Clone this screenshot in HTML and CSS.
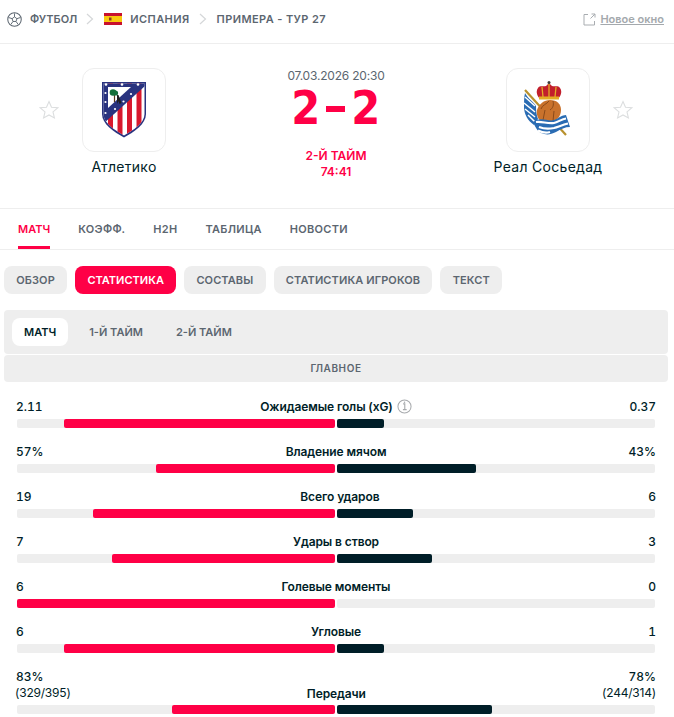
FILE: index.html
```html
<!DOCTYPE html>
<html lang="ru">
<head>
<meta charset="utf-8">
<title>Атлетико - Реал Сосьедад</title>
<link rel="stylesheet" href="styles.css">
</head>
<body>
<header class="crumbs">
  <nav class="crumb-list">
    <svg class="ball" viewBox="0 0 16 16" width="15" height="15"><circle cx="8" cy="8" r="7.200" fill="none" stroke="#5c6670" stroke-width="1.100"/><path d="M8 5.200l2.600 1.900-1 3H6.400l-1-3zM8 5.200V1.500M10.600 7.100l3.600-1.200M9.600 10.100l2.200 3M6.400 10.100l-2.200 3M5.400 7.100L1.800 5.900" fill="none" stroke="#5c6670" stroke-width="1"/></svg>
    <span class="crumb">ФУТБОЛ</span>
    <svg class="chev" viewBox="0 0 8 12" width="8" height="12"><path d="M1 1l5.500 5L1 11" fill="none" stroke="#d5d7d9" stroke-width="1.200"/></svg>
    <svg class="flag" viewBox="0 0 18 12" width="18" height="12"><rect width="18" height="12" fill="#c8102e"/><rect y="3" width="18" height="6" fill="#f9c80e"/><rect x="5" y="4.500" width="2.500" height="3" fill="#8a3a1c"/></svg>
    <span class="crumb">ИСПАНИЯ</span>
    <svg class="chev" viewBox="0 0 8 12" width="8" height="12"><path d="M1 1l5.500 5L1 11" fill="none" stroke="#d5d7d9" stroke-width="1.200"/></svg>
    <span class="crumb">ПРИМЕРА - ТУР 27</span>
  </nav>
  <a class="new-window" href="#">
    <svg viewBox="0 0 13 13" width="13" height="13"><path d="M5 1.500H1v10.500h10.500V8M7.500 5.500l4.500-4.500M8.500 1H12v3.500" fill="none" stroke="#a9adb1" stroke-width="1"/></svg>
    <span>Новое окно</span>
  </a>
</header>

<section class="match">
  <div class="team">
    <svg class="star" viewBox="0 0 20 20" width="20" height="20"><path d="M10 1.500l2.500 5.700 6.200.6-4.700 4.100 1.400 6.100L10 14.900l-5.400 3.100L6 11.900 1.300 7.800l6.200-.6z" fill="none" stroke="#dcdedf" stroke-width="1.100"/></svg>
    <div class="team-main">
      <div class="crest-box">
        <svg viewBox="0 0 44 56" width="44" height="56">
          <defs>
            <clipPath id="shield"><path d="M1.500 1.500h41V32c0 9-11 16-20.500 21.500C12.500 48 1.500 41 1.500 32z"/></clipPath>
          </defs>
          <path d="M0 0h44v32c0 10-12 18-22 23.500C12 50 0 42 0 32z" fill="#29337f"/>
          <g clip-path="url(#shield)">
            <rect width="44" height="56" fill="#fff"/>
            <path d="M6 0h5v56H6zM15.500 0h5v56h-5zM25 0h5v56h-5zM34.500 0h5v56h-5z" fill="#d8182d"/>
            <path d="M0 0h44v3L0 43z" fill="#29337f"/>
          </g>
          <path d="M6 5h23L6 26z" fill="#fff"/>
          <path d="M12.500 13v7" stroke="#5a3a1c" stroke-width="1.200"/>
          <circle cx="11" cy="10.500" r="3.300" fill="#15703a"/>
          <circle cx="13.500" cy="11" r="2.600" fill="#15703a"/>
          <path d="M15 13l1.500 0 3 8-2 1-1-3-1.500 3z" fill="#1f1f1f"/>
          <g fill="#fff">
            <circle cx="4" cy="2.500" r="1.300"/><circle cx="20" cy="2.500" r="1.300"/><circle cx="36" cy="2.500" r="1.300"/>
            <circle cx="3.500" cy="11" r="1.100"/><circle cx="3.500" cy="20" r="1.100"/><circle cx="3.500" cy="31" r="1.100"/>
            <circle cx="29" cy="12" r="1.100"/><circle cx="21.500" cy="19.500" r="1.100"/><circle cx="13" cy="27" r="1.100"/>
          </g>
        </svg>
      </div>
      <div class="team-name">Атлетико</div>
    </div>
  </div>

  <div class="score-col">
    <div class="date">07.03.2026 20:30</div>
    <div class="score"><span>2</span><i class="dash"></i><span>2</span></div>
    <div class="status">2-Й ТАЙМ</div>
    <div class="status">74:41</div>
  </div>

  <div class="team">
    <div class="team-main">
      <div class="crest-box">
        <svg class="crest-rs" viewBox="0 0 56 64" width="56" height="64">
          <path d="M5 10l41 45" stroke="#b8912d" stroke-width="2.200"/>
          <path d="M5 13c3 6 9 9 11 13 0 3 0 8 2 13l-4 6c-6-4-10-11-10-18 0-5 0-10 1-14z" fill="#2a6cb3"/>
          <path d="M5 17l10 9M4 23l11 9M5 29l10 8M8 35l7 7" stroke="#fff" stroke-width="1.500"/>
          <path d="M18 8c2-3 5-1 8-2l3-3 3 3c3 1 6-1 8 2 3 4 0 9-2 11H20c-2-2-5-7-2-11z" fill="#c21f2c"/>
          <path d="M19 16.500h20v3H19z" fill="#e4ad24"/>
          <path d="M22 7l1 10M29 4v13M36 7l-1 10" stroke="#e4ad24" stroke-width="1.300"/>
          <circle cx="29" cy="2.500" r="1.500" fill="#3c3c3c"/>
          <path d="M30 20c7 0 11 4 11 10s-4 11-10 12H22c-4-2-6-8-5-12 2-6 7-10 13-10z" fill="#c9722c"/>
          <path d="M29 21c-2 3-7 4-8 8M33 21c1 4 0 7-3 9M25 30l-2 10M34 31l-1 10" stroke="#8a4a1a" stroke-width="1" fill="none"/>
          <path d="M13 42c8-6 15 0 21-2 5-2 8-5 12-5l4 12c-5 0-9 2-14 5-6 3-10 3-15 1-4-2-6-7-8-11z" fill="#2a6cb3"/>
          <path d="M16 42c6-1 11 2 18 1 4-1 8-4 12-4.500M19 47c5 2 10 2 15 1 4-1 8-3 14-4.500M18 50.500c4 2 8 3 12 1.500" stroke="#fff" stroke-width="2.200" fill="none"/>
        </svg>
      </div>
      <div class="team-name">Реал Сосьедад</div>
    </div>
    <svg class="star" viewBox="0 0 20 20" width="20" height="20"><path d="M10 1.500l2.500 5.700 6.200.6-4.700 4.100 1.400 6.100L10 14.900l-5.400 3.100L6 11.900 1.300 7.800l6.200-.6z" fill="none" stroke="#dcdedf" stroke-width="1.100"/></svg>
  </div>
</section>

<nav class="main-tabs">
  <a class="main-tab is-active" href="#">МАТЧ</a>
  <a class="main-tab" href="#">КОЭФФ.</a>
  <a class="main-tab" href="#">H2H</a>
  <a class="main-tab" href="#">ТАБЛИЦА</a>
  <a class="main-tab" href="#">НОВОСТИ</a>
</nav>

<nav class="pills">
  <a class="pill" href="#">ОБЗОР</a>
  <a class="pill is-active" href="#">СТАТИСТИКА</a>
  <a class="pill" href="#">СОСТАВЫ</a>
  <a class="pill" href="#">СТАТИСТИКА ИГРОКОВ</a>
  <a class="pill" href="#">ТЕКСТ</a>
</nav>

<div class="periods">
  <a class="period is-active" href="#">МАТЧ</a>
  <a class="period" href="#">1-Й ТАЙМ</a>
  <a class="period" href="#">2-Й ТАЙМ</a>
</div>
<div class="group-title">ГЛАВНОЕ</div>

<section class="stats">
  <div class="stat">
    <div class="stat-head"><span class="val">2.11</span><span class="label">Ожидаемые голы (xG)<svg class="info" viewBox="0 0 16 16" width="15" height="15"><circle cx="8" cy="8" r="7" fill="none" stroke="#a7aaad" stroke-width="1.100"/><path d="M6.500 5.200H8.300V11M6.300 11.300h4" fill="none" stroke="#a7aaad" stroke-width="1.200"/><circle cx="8" cy="3.500" r=".8" fill="#a7aaad"/></svg></span><span class="val">0.37</span></div>
    <div class="bars"><div class="track home"><div class="fill" style="width:85.300%"></div></div><div class="track away"><div class="fill" style="width:14.700%"></div></div></div>
  </div>
  <div class="stat">
    <div class="stat-head"><span class="val">57%</span><span class="label">Владение мячом</span><span class="val">43%</span></div>
    <div class="bars"><div class="track home"><div class="fill" style="width:56.300%"></div></div><div class="track away"><div class="fill" style="width:43.700%"></div></div></div>
  </div>
  <div class="stat">
    <div class="stat-head"><span class="val">19</span><span class="label">Всего ударов</span><span class="val">6</span></div>
    <div class="bars"><div class="track home"><div class="fill" style="width:76%"></div></div><div class="track away"><div class="fill" style="width:24%"></div></div></div>
  </div>
  <div class="stat">
    <div class="stat-head"><span class="val">7</span><span class="label">Удары в створ</span><span class="val">3</span></div>
    <div class="bars"><div class="track home"><div class="fill" style="width:70%"></div></div><div class="track away"><div class="fill" style="width:30%"></div></div></div>
  </div>
  <div class="stat">
    <div class="stat-head"><span class="val">6</span><span class="label">Голевые моменты</span><span class="val">0</span></div>
    <div class="bars"><div class="track home"><div class="fill" style="width:100%"></div></div><div class="track away"><div class="fill" style="width:0%"></div></div></div>
  </div>
  <div class="stat">
    <div class="stat-head"><span class="val">6</span><span class="label">Угловые</span><span class="val">1</span></div>
    <div class="bars"><div class="track home"><div class="fill" style="width:85.300%"></div></div><div class="track away"><div class="fill" style="width:14.700%"></div></div></div>
  </div>
  <div class="stat stat-tall">
    <div class="stat-head stat-head-tall">
      <div class="val-stack val-left"><span class="val">83%</span><span class="sub">(329/395)</span></div>
      <span class="label">Передачи</span>
      <div class="val-stack val-right"><span class="val">78%</span><span class="sub">(244/314)</span></div>
    </div>
    <div class="bars"><div class="track home"><div class="fill" style="width:51.300%"></div></div><div class="track away"><div class="fill" style="width:48.700%"></div></div></div>
  </div>
</section>
</body>
</html>
```
FILE: styles.css
```css
* { box-sizing: border-box; }
html, body { margin: 0; padding: 0; background: #fff; }
body {
  width: 674px;
  height: 717px;
  overflow: hidden;
  font-family: Inter, "Noto Sans", sans-serif;
  color: #001e28;
}
a { text-decoration: none; color: inherit; }

.crumbs {
  height: 44px;
  display: flex;
  align-items: center;
  justify-content: space-between;
  padding: 0 10px 5px 7px;
  border-bottom: 1px solid #eeeeee;
}
.crumb-list { display: flex; align-items: center; }
.ball { margin-right: 8px; }
.crumb {
  font-size: 11px;
  font-weight: 600;
  letter-spacing: 0.4px;
  color: #5c6670;
}
.crumb:first-of-type { letter-spacing: 0; }
.chev { margin: 0 10px 0 9px; }
.flag { margin-right: 8px; }
.new-window {
  display: flex;
  align-items: center;
  gap: 4px;
  font-size: 11px;
  font-weight: 600;
  color: #a4a9ad;
}
.new-window span { text-decoration: underline; }

.match {
  height: 165px;
  display: flex;
  justify-content: space-between;
  padding: 24px 41px 0 39px;
  border-bottom: 1px solid #eeeeee;
}
.team { display: flex; align-items: flex-start; }
.star { margin-top: 32px; flex: none; }
.team-main { width: 124px; display: flex; flex-direction: column; align-items: center; margin: 0 0 0 3px; }
.team + .score-col + .team .team-main { margin: 0 3px 0 0; }
.crest-box {
  width: 84px;
  height: 84px;
  border: 1px solid #eeeeee;
  border-radius: 12px;
  display: flex;
  align-items: center;
  justify-content: center;
}
.crest-rs { flex: none; margin-top: 3px; }
.team-name { margin-top: 6px; font-size: 14px; line-height: 17px; letter-spacing: 0.3px; color: #001e28; }
.score-col { display: flex; flex-direction: column; align-items: center; }
.date { font-size: 12px; line-height: 16px; letter-spacing: -0.2px; color: #5c6670; }
.score {
  height: 48px;
  display: flex;
  align-items: center;
  gap: 4px;
  margin-bottom: 16px;
}
.score span {
  font-family: "DejaVu Sans", sans-serif;
  font-size: 48px;
  font-weight: 700;
  line-height: 40px;
  color: #ff0046;
  transform: scale(0.870, 0.950);
}
.dash { width: 19px; height: 6px; margin-top: 2px; background: #ff0046; }
.status { font-size: 12px; font-weight: 600; line-height: 16px; color: #ff0046; }

.main-tabs {
  height: 41px;
  display: flex;
  gap: 28px;
  padding: 0 18px;
  border-bottom: 1px solid #eeeeee;
}
.main-tab {
  height: 40px;
  line-height: 40px;
  font-size: 11px;
  font-weight: 600;
  letter-spacing: 0.3px;
  color: #5c6670;
}
.main-tab.is-active { color: #ff0046; border-bottom: 3px solid #ff0046; letter-spacing: 0; }

.pills { display: flex; gap: 8px; padding: 16px 0 0 4px; }
.pill {
  height: 28px;
  line-height: 28px;
  padding: 0 12.25px;
  background: #eeeeee;
  border-radius: 8px;
  font-size: 11px;
  font-weight: 600;
  letter-spacing: 0.1px;
  color: #5c6670;
}
.pill.is-active { background: #ff0046; color: #fff; letter-spacing: 0; }

.periods {
  width: 664px;
  height: 44px;
  margin: 16px 0 0 4px;
  padding: 8px;
  display: flex;
  gap: 9px;
  background: #eeeeee;
  border-radius: 4px;
}
.period {
  height: 28px;
  line-height: 28px;
  padding: 0 12px;
  border-radius: 8px;
  font-size: 11px;
  font-weight: 600;
  color: #5c6670;
}
.period.is-active { background: #fff; color: #001e28; }

.group-title {
  width: 664px;
  height: 27px;
  margin: 1px 0 0 4px;
  background: #eeeeee;
  border-radius: 4px;
  text-align: center;
  line-height: 27px;
  font-size: 10px;
  font-weight: 600;
  letter-spacing: 0.6px;
  color: #5c6670;
}

.stats { padding: 13px 18px 0 16px; display: flex; flex-direction: column; gap: 12px; }
.stat { height: 33px; display: flex; flex-direction: column; }
.stat-tall { height: auto; }
.stat-head {
  height: 22px;
  margin-bottom: 2px;
  display: flex;
  align-items: center;
  justify-content: space-between;
}
.stat-head-tall { height: 40px; align-items: flex-end; padding-bottom: 4px; margin-bottom: 0; }
.val { font-size: 12px; font-weight: 500; font-variant-numeric: tabular-nums; }
.label { font-size: 12px; font-weight: 600; letter-spacing: -0.1px; display: flex; align-items: center; }
.info { margin-left: 4px; }
.val-stack { display: flex; flex-direction: column; line-height: 16px; }
.val-left { margin-left: -1px; }
.val-right { align-items: flex-end; }
.val-left .val { margin-left: 1px; }
.sub { font-size: 12px; letter-spacing: -0.2px; color: #001e28; }
.bars { display: flex; gap: 2px; margin-left: 1px; }
.track { width: 318px; height: 9px; background: #eeeeee; border-radius: 2px; display: flex; }
.track.home { justify-content: flex-end; }
.fill { height: 9px; border-radius: 2px; }
.home .fill { background: #ff0046; }
.away .fill { background: #001e28; }
```
